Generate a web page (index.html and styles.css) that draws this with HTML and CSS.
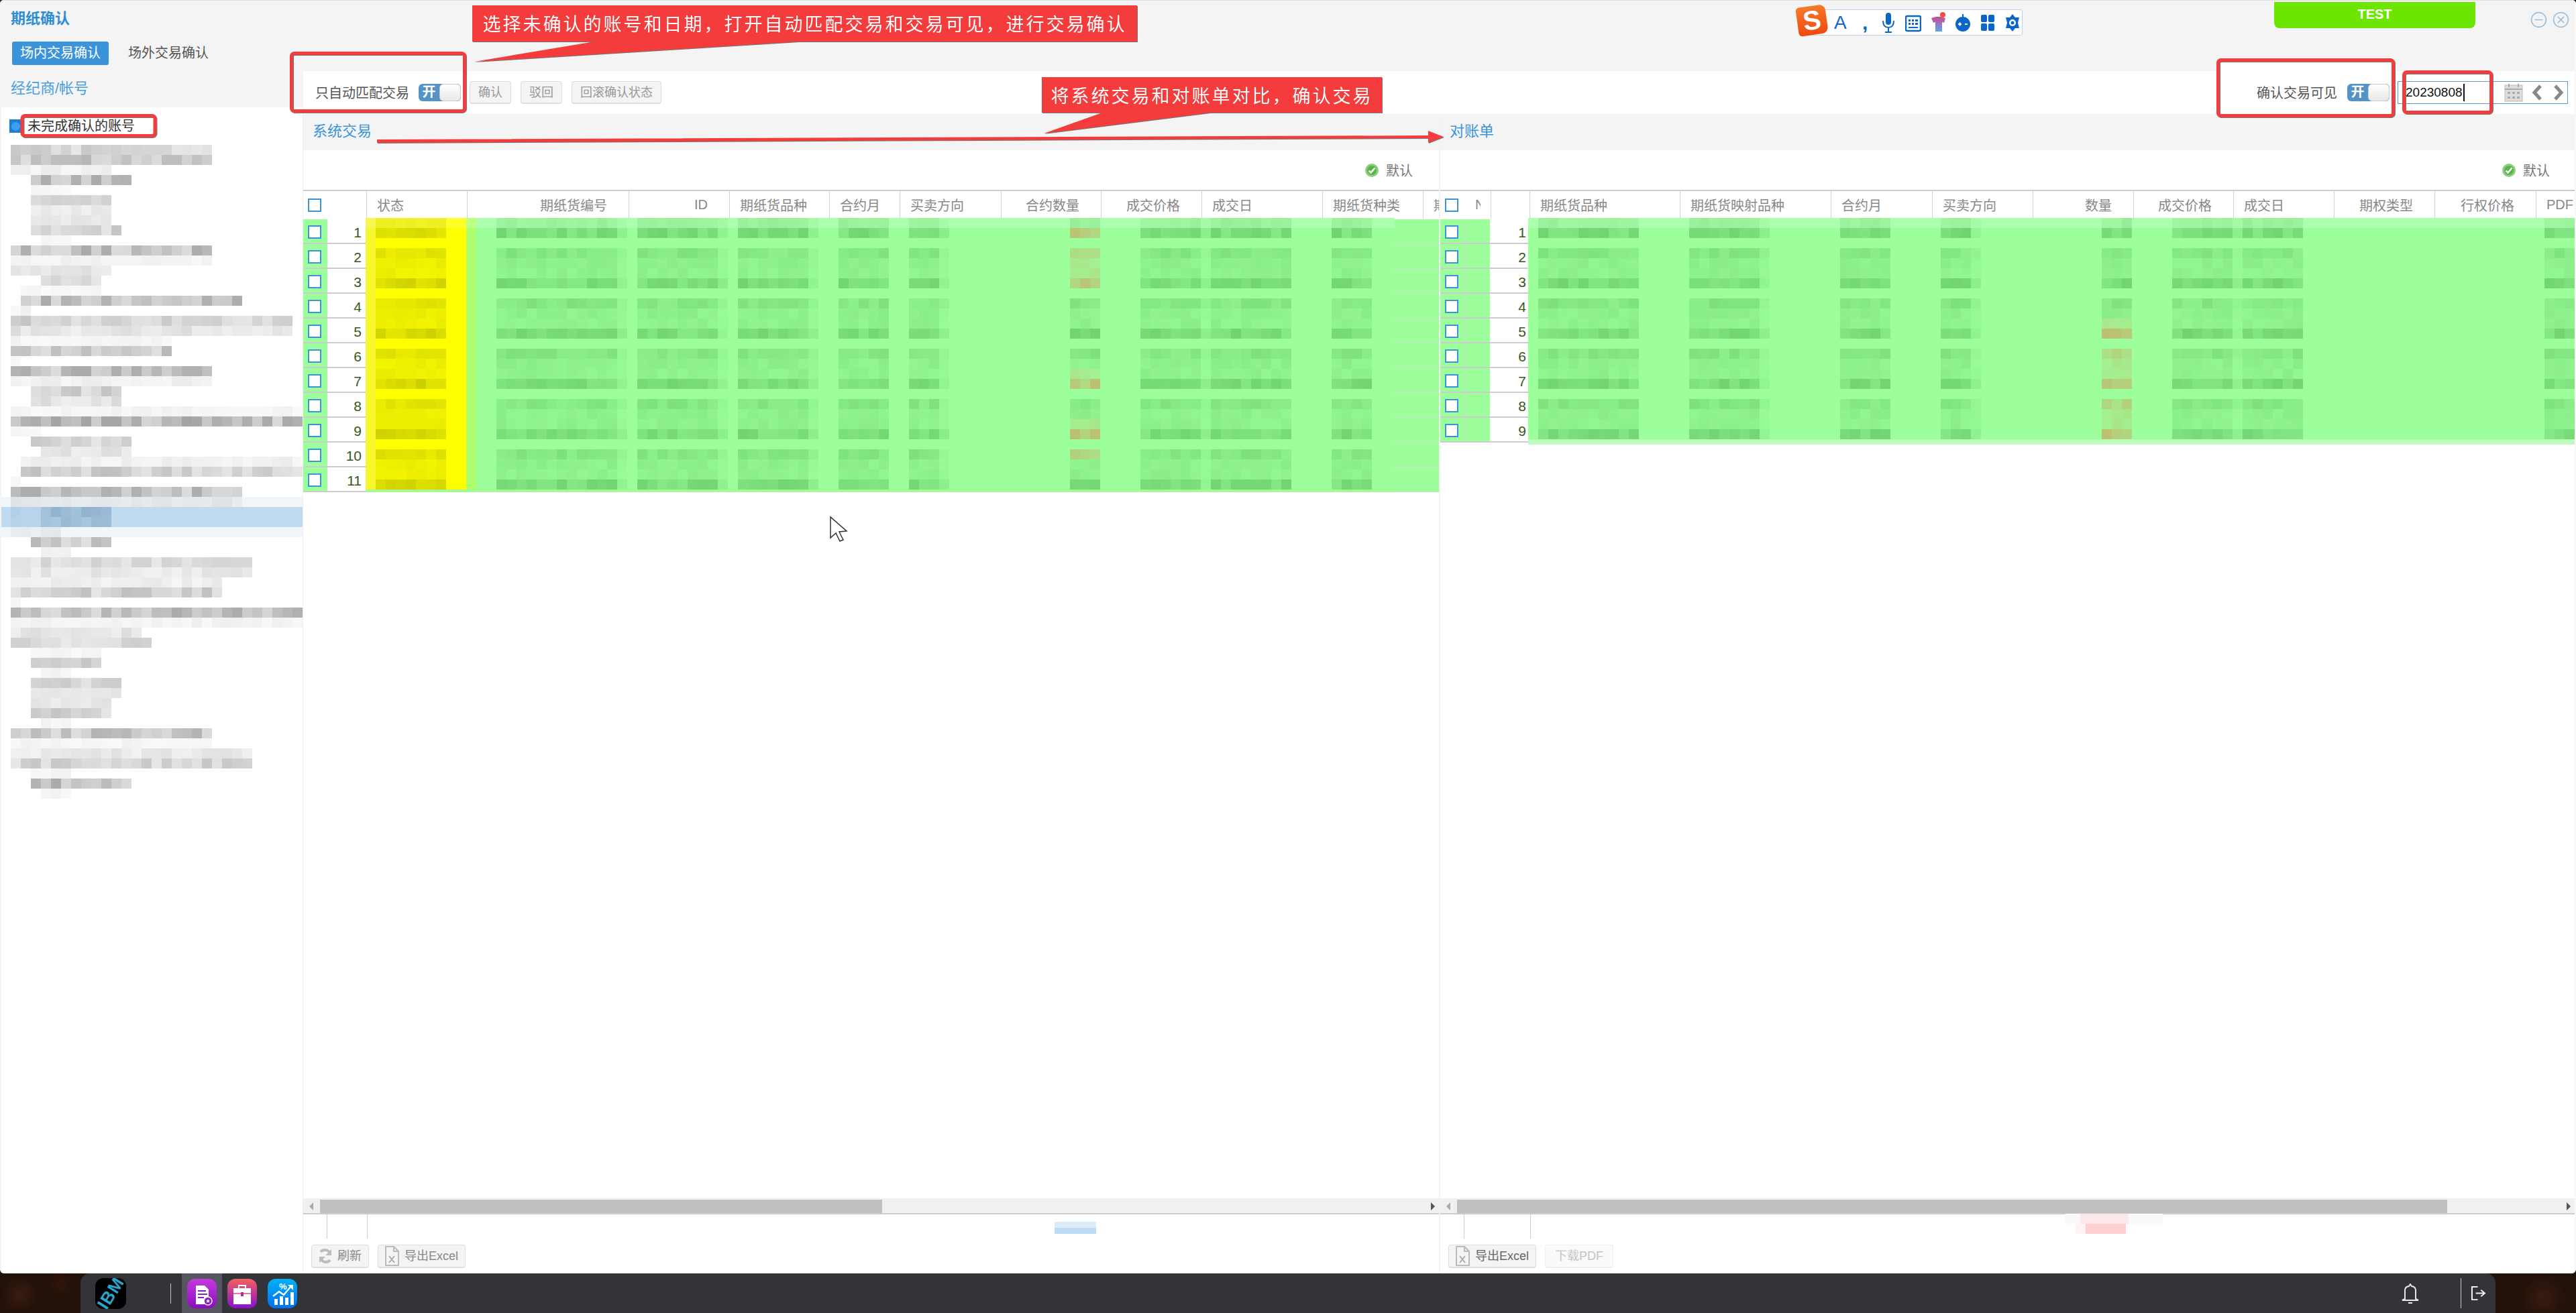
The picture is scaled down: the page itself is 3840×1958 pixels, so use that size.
FILE: index.html
```html
<!DOCTYPE html>
<html lang="zh-CN">
<head>
    <meta charset="UTF-8">
    <title>期纸确认</title>
    <link rel="stylesheet" href="styles.css">
</head>
<body>
    <div class="window">
        <aside class="sidebar">
            <div class="side-head">
                <div class="side-title">期纸确认</div>
                <div class="tabs">
                    <span class="tab tab-on">场内交易确认</span>
                    <span class="tab">场外交易确认</span>
                </div>
                <div class="side-sub">经纪商/帐号</div>
            </div>
            <div class="tree">
                <div class="tree-filter">
                    <span class="radio"><i></i></span>
                    <span class="filter-text">未完成确认的账号</span>
                </div>
                <canvas id="treeMosaic" class="tree-mosaic" width="450" height="975"></canvas>
            </div>
        </aside>

        <main class="main">
            <div class="topbar">
                <div class="test-tag">TEST</div>
                <div class="win-btns">
                    <svg class="win-btn" viewBox="0 0 24 24"><circle cx="12" cy="12" r="10.5"/><path d="M6 12h12"/></svg>
                    <svg class="win-btn" viewBox="0 0 24 24"><circle cx="12" cy="12" r="10.5"/><path d="M7.5 7.5l9 9M16.5 7.5l-9 9"/></svg>
                </div>
            </div>

            <div class="toolbar">
                <span class="tool-label">只自动匹配交易</span>
                <span class="switch switch-a"><b>开</b><i></i></span>
                <button class="btn btn-confirm">确认</button>
                <button class="btn">驳回</button>
                <button class="btn">回滚确认状态</button>
                <div class="tool-right">
                    <span class="tool-label">确认交易可见</span>
                    <span class="switch switch-b"><b>开</b><i></i></span>
                    <div class="date-field">
                        <span class="date-text">20230808</span><span class="caret"></span>
                        <svg class="cal-icon" viewBox="0 0 28 28">
                            <rect x="1" y="3" width="26" height="24" fill="#ddd" stroke="#bbb"/>
                            <path d="M1 9h26" stroke="#aaa" stroke-width="2"/>
                            <path d="M7 1v5M21 1v5" stroke="#aaa" stroke-width="2"/>
                            <path d="M5 13h4v3H5zM12 13h4v3h-4zM19 13h4v3h-4zM5 20h4v3H5zM12 20h4v3h-4zM19 20h4v3h-4z" fill="#aaa"/>
                        </svg>
                        <svg class="chev" viewBox="0 0 16 24"><path d="M13 2L4 12l9 10"/></svg>
                        <svg class="chev chev-next" viewBox="0 0 16 24"><path d="M3 2l9 10-9 10"/></svg>
                    </div>
                </div>
            </div>

            <div class="panes">
                <section class="pane pane-left">
                    <div class="pane-title">系统交易</div>
                    <div class="pane-tools">
                        <svg class="ok-icon" viewBox="0 0 20 20"><circle cx="10" cy="10" r="10" fill="#8ccf7a"/><circle cx="10" cy="10" r="7" fill="#5cb350"/><path d="M5.5 10.5l3 3 6-7" fill="none" stroke="#fff" stroke-width="2.4"/></svg>
                        <span>默认</span>
                    </div>
                    <div class="grid-head head-left">
                        <span class="cell"><i class="box"></i></span>
                        <span class="cell cell-line"></span>
                        <span class="cell cell-line">状态</span>
                        <span class="cell cell-line to-right">期纸货编号</span>
                        <span class="cell cell-line to-right">ID</span>
                        <span class="cell cell-line">期纸货品种</span>
                        <span class="cell cell-line">合约月</span>
                        <span class="cell cell-line">买卖方向</span>
                        <span class="cell cell-line to-right">合约数量</span>
                        <span class="cell cell-line to-right">成交价格</span>
                        <span class="cell cell-line">成交日</span>
                        <span class="cell cell-line">期纸货种类</span>
                        <span class="cell">期权类型</span>
                    </div>
                    <div class="grid-body">
                        <div class="row row-left"><span class="c-check"><i class="box"></i></span><span class="c-num">1</span><span class="c-state"></span><span class="c-fill"></span></div>
                        <div class="row row-left"><span class="c-check"><i class="box"></i></span><span class="c-num">2</span><span class="c-state"></span><span class="c-fill"></span></div>
                        <div class="row row-left"><span class="c-check"><i class="box"></i></span><span class="c-num">3</span><span class="c-state"></span><span class="c-fill"></span></div>
                        <div class="row row-left"><span class="c-check"><i class="box"></i></span><span class="c-num">4</span><span class="c-state"></span><span class="c-fill"></span></div>
                        <div class="row row-left"><span class="c-check"><i class="box"></i></span><span class="c-num">5</span><span class="c-state"></span><span class="c-fill"></span></div>
                        <div class="row row-left"><span class="c-check"><i class="box"></i></span><span class="c-num">6</span><span class="c-state"></span><span class="c-fill"></span></div>
                        <div class="row row-left"><span class="c-check"><i class="box"></i></span><span class="c-num">7</span><span class="c-state"></span><span class="c-fill"></span></div>
                        <div class="row row-left"><span class="c-check"><i class="box"></i></span><span class="c-num">8</span><span class="c-state"></span><span class="c-fill"></span></div>
                        <div class="row row-left"><span class="c-check"><i class="box"></i></span><span class="c-num">9</span><span class="c-state"></span><span class="c-fill"></span></div>
                        <div class="row row-left"><span class="c-check"><i class="box"></i></span><span class="c-num">10</span><span class="c-state"></span><span class="c-fill"></span></div>
                        <div class="row row-left"><span class="c-check"><i class="box"></i></span><span class="c-num">11</span><span class="c-state"></span><span class="c-fill"></span></div>
                        <canvas id="leftMosaic" class="mosaic mosaic-left" width="1534" height="409"></canvas>
                    </div>
                    <div class="hscroll">
                        <i class="arrow arrow-back"></i>
                        <i class="thumb thumb-left"></i>
                        <i class="arrow arrow-next"></i>
                    </div>
                    <div class="sum-row">
                        <i class="sum-a"></i><i class="sum-b"></i>
                        <i class="sum-blur sum-blue"></i>
                    </div>
                    <div class="pane-foot">
                        <button class="btn foot-btn">
                            <svg class="foot-icon" viewBox="0 0 20 24"><path d="M17 9a8 8 0 0 0-14-3M3 15a8 8 0 0 0 14 3" fill="none" stroke="#bbb" stroke-width="4"/><path d="M19 2v9h-9zM1 22v-9h9z" fill="#bbb"/></svg>
                            刷新
                        </button>
                        <button class="btn foot-btn">
                            <svg class="foot-icon doc-icon" viewBox="0 0 21 30"><path d="M1 1h12l7 7v21H1z" fill="none" stroke="#bbb" stroke-width="2"/><path d="M13 1v7h7" fill="none" stroke="#bbb" stroke-width="2"/><path d="M6 15l8 10M14 15L6 25" stroke="#aaa" stroke-width="2"/></svg>
                            导出Excel
                        </button>
                    </div>
                </section>

                <section class="pane pane-right">
                    <div class="pane-title">对账单</div>
                    <div class="pane-tools">
                        <svg class="ok-icon" viewBox="0 0 20 20"><circle cx="10" cy="10" r="10" fill="#8ccf7a"/><circle cx="10" cy="10" r="7" fill="#5cb350"/><path d="M5.5 10.5l3 3 6-7" fill="none" stroke="#fff" stroke-width="2.4"/></svg>
                        <span>默认</span>
                    </div>
                    <div class="grid-head head-right">
                        <span class="cell"><i class="box"></i></span>
                        <span class="cell cell-clip">NO</span>
                        <span class="cell cell-line"></span>
                        <span class="cell cell-line"></span>
                        <span class="cell cell-line">期纸货品种</span>
                        <span class="cell cell-line">期纸货映射品种</span>
                        <span class="cell cell-line">合约月</span>
                        <span class="cell cell-line">买卖方向</span>
                        <span class="cell cell-line to-right">数量</span>
                        <span class="cell cell-line to-right">成交价格</span>
                        <span class="cell cell-line">成交日</span>
                        <span class="cell cell-line to-right">期权类型</span>
                        <span class="cell cell-line to-right">行权价格</span>
                        <span class="cell">PDF</span>
                    </div>
                    <div class="grid-body">
                        <div class="row row-right"><span class="c-check c-check-line"><i class="box"></i></span><span class="c-no"></span><span class="c-num">1</span><span class="c-fill"></span></div>
                        <div class="row row-right"><span class="c-check c-check-line"><i class="box"></i></span><span class="c-no"></span><span class="c-num">2</span><span class="c-fill"></span></div>
                        <div class="row row-right"><span class="c-check c-check-line"><i class="box"></i></span><span class="c-no"></span><span class="c-num">3</span><span class="c-fill"></span></div>
                        <div class="row row-right"><span class="c-check c-check-line"><i class="box"></i></span><span class="c-no"></span><span class="c-num">4</span><span class="c-fill"></span></div>
                        <div class="row row-right"><span class="c-check c-check-line"><i class="box"></i></span><span class="c-no"></span><span class="c-num">5</span><span class="c-fill"></span></div>
                        <div class="row row-right"><span class="c-check c-check-line"><i class="box"></i></span><span class="c-no"></span><span class="c-num">6</span><span class="c-fill"></span></div>
                        <div class="row row-right"><span class="c-check c-check-line"><i class="box"></i></span><span class="c-no"></span><span class="c-num">7</span><span class="c-fill"></span></div>
                        <div class="row row-right"><span class="c-check c-check-line"><i class="box"></i></span><span class="c-no"></span><span class="c-num">8</span><span class="c-fill"></span></div>
                        <div class="row row-right"><span class="c-check c-check-line"><i class="box"></i></span><span class="c-no"></span><span class="c-num">9</span><span class="c-fill"></span></div>
                        <canvas id="rightMosaic" class="mosaic mosaic-right" width="1560" height="338"></canvas>
                    </div>
                    <div class="hscroll">
                        <i class="arrow arrow-back"></i>
                        <i class="thumb thumb-right"></i>
                        <i class="arrow arrow-next"></i>
                    </div>
                    <div class="sum-row sum-row-right">
                        <i class="sum-a"></i><i class="sum-b"></i>
                        <i class="sum-blur sum-pink-top"></i>
                        <i class="sum-blur sum-pink"></i>
                    </div>
                    <div class="pane-foot">
                        <button class="btn foot-btn">
                            <svg class="foot-icon doc-icon" viewBox="0 0 21 30"><path d="M1 1h12l7 7v21H1z" fill="none" stroke="#bbb" stroke-width="2"/><path d="M13 1v7h7" fill="none" stroke="#bbb" stroke-width="2"/><path d="M6 15l8 10M14 15L6 25" stroke="#aaa" stroke-width="2"/></svg>
                            <span class="btn-dark">导出Excel</span>
                        </button>
                        <button class="btn foot-btn btn-off">下载PDF</button>
                    </div>
                </section>
            </div>
        </main>
    </div>

    <div class="dock">
        <span class="app-ibm"><span>IBM</span></span>
        <i class="dock-sep"></i>
        <span class="dock-active">
            <span class="app-icon app-purple">
                <svg viewBox="0 0 44 44"><path d="M13 10h13l6 6v22H13z" fill="#fff"/><path d="M16 18h12M16 23h14M16 28h9" stroke="#8a1fc0" stroke-width="2"/><circle cx="31" cy="33" r="6" fill="#8a1fc0" stroke="#fff" stroke-width="1.5"/><path d="M31 30l1 2.2h2l-1.6 1.4.6 2.2-2-1.2-2 1.2.6-2.2-1.6-1.4h2z" fill="#fff"/></svg>
            </span>
        </span>
        <span class="app-icon app-red">
            <svg viewBox="0 0 44 44"><path d="M17 14v-4h10v4" fill="none" stroke="#fff" stroke-width="2"/><rect x="9" y="14" width="26" height="24" fill="#fff"/><path d="M9 22h26" stroke="#d84a8a" stroke-width="1.5"/><rect x="20" y="20" width="4" height="6" fill="#b02aa0"/></svg>
        </span>
        <span class="app-icon app-blue">
            <svg viewBox="0 0 44 44"><path d="M10 30v9h5v-9zM18 26v13h5V26zM26 28v11h5V28zM34 20v19h5V20z" fill="#fff"/><path d="M8 26l9-7 7 5 11-13" fill="none" stroke="#fff" stroke-width="2.4"/><path d="M30 9h8v8z" fill="#fff"/><text x="17" y="16" class="app-pct">%</text></svg>
        </span>
        <span class="dock-space"></span>
        <svg class="bell" viewBox="0 0 26 30"><path d="M5 23V10q0-5 6-6l2-3 2 3q6 1 6 6v13l4 2H1z" fill="none" stroke="#e8e8e8" stroke-width="2"/><path d="M10 29h6" stroke="#e8e8e8" stroke-width="2"/></svg>
        <i class="dock-sep dock-sep-end"></i>
        <svg class="exit" viewBox="0 0 24 24"><path d="M11 2H2v20h9" fill="none" stroke="#eee" stroke-width="2"/><path d="M2 2l0 20" stroke="#eee" stroke-width="2"/><path d="M8 12h13M16 7l6 5-6 5" fill="none" stroke="#eee" stroke-width="2"/></svg>
    </div>

    <div class="sogou">
        <span class="sogou-logo">S</span>
        <span class="sogou-a">A</span>
        <span class="sogou-dot">,</span>
        <svg class="sogou-icon" viewBox="0 0 24 32"><rect x="8" y="1" width="8" height="18" rx="4" fill="#0a66c8"/><path d="M4 13q0 10 8 10t8-10M12 23v7M7 30h10" fill="none" stroke="#0a66c8" stroke-width="2"/></svg>
        <svg class="sogou-icon" viewBox="0 0 24 32"><rect x="1" y="6" width="22" height="22" rx="2" fill="none" stroke="#0a66c8" stroke-width="2.5"/><path d="M5 11h3v3H5zM10 11h3v3h-3zM15 11h4v3h-4zM5 16h3v3H5zM10 16h3v3h-3zM15 16h4v3h-4zM5 22h14v2H5z" fill="#0a66c8"/></svg>
        <svg class="sogou-icon" viewBox="0 0 24 32"><defs><linearGradient id="shirt" x1="0" y1="0" x2="0" y2="1"><stop offset="0" stop-color="#d04a90"/><stop offset="1" stop-color="#58a8f0"/></linearGradient></defs><path d="M2 9l7-2h7l7 2-2 7-3-1v14H8V15l-3 1z" fill="url(#shirt)"/><circle cx="19" cy="4" r="4" fill="#f0503c"/></svg>
        <svg class="sogou-icon" viewBox="0 0 24 32"><circle cx="12" cy="18" r="11" fill="#0a66c8"/><path d="M12 3v6" stroke="#0a66c8" stroke-width="2"/><path d="M5 18h5M7.5 15.500v5M15 18h4" stroke="#fff" stroke-width="2"/></svg>
        <svg class="sogou-icon" viewBox="0 0 24 32"><rect x="2" y="4" width="9" height="11" rx="2" fill="#0a66c8"/><rect x="13" y="4" width="9" height="11" rx="2" fill="#0a66c8"/><rect x="2" y="17" width="9" height="11" rx="2" fill="#0a66c8"/><rect x="13" y="17" width="9" height="11" rx="2" fill="#0a66c8"/></svg>
        <svg class="sogou-icon" viewBox="0 0 24 32"><path d="M12 3l4 5h6l-2 8 2 8h-6l-4 5-4-5H2l2-8-2-8h6z" fill="#0a66c8"/><circle cx="12" cy="16" r="5" fill="#fff"/><circle cx="12" cy="16" r="2.500" fill="#0a66c8"/></svg>
    </div>

    <svg class="marks" width="3840" height="1958" viewBox="0 0 3840 1958">
        <path d="M3309 92h256v14h-256zM3309 170h256v2h-256z" fill="#fff"/>
        <g class="marks-red">
            <path d="M704 8H1695V62H1191L707 92 886 62H704z"/>
            <path d="M1553 115H2060V168H1804L1556 199 1643 168H1553z"/>
            <path d="M562 208L2129 202V195L2152 204 2129 213V206L562 213z"/>
            <rect class="mark-box" x="434.500" y="79.500" width="258" height="86" rx="4"/>
            <rect class="mark-box" x="33" y="172.500" width="198" height="30" rx="4"/>
            <rect class="mark-box" x="3306.500" y="89.500" width="261" height="83" rx="4"/>
            <rect class="mark-box" x="3583.500" y="107.500" width="130" height="60" rx="4"/>
        </g>
        <path class="pointer" d="M1238 771v31l8-7 6 12 5-2-6-12 11-1z"/>
    </svg>
    <div class="callout callout-a">选择未确认的账号和日期，打开自动匹配交易和交易可见，进行交易确认</div>
    <div class="callout callout-b">将系统交易和对账单对比，确认交易</div>

    <script src="script.js"></script>
</body>
</html>
```

FILE: styles.css
```css
* {
    box-sizing: border-box;
}
html, body {
    margin: 0;
    height: 1958px;
    overflow: hidden;
}
body {
    position: relative;
    width: 3840px;
    font-family: "Liberation Sans", "Noto Sans CJK SC", sans-serif;
    color: #777;
    background-color: #22100a;
    background-image:
        radial-gradient(circle at 30px 1930px, #3a1c10 0, transparent 30px),
        radial-gradient(circle at 3790px 1935px, #3a1c10 0, transparent 36px),
        radial-gradient(circle at 90px 1915px, #301608 0, transparent 22px);
}
button {
    font-family: inherit;
}

/* app window */
.window {
    display: flex;
    height: 1899px;
    background: #f4f4f4;
    border-top: 1px solid #ddd;
    border-right: 2px solid #f8f8f8;
    border-bottom: 1px solid #eee;
    border-radius: 5px 5px 6px 6px;
    overflow: hidden;
}

/* sidebar */
.sidebar {
    display: flex;
    flex-direction: column;
    flex: none;
    width: 452px;
}
.side-head {
    flex: none;
    height: 159px;
    padding: 14px 0 0 16px;
}
.side-title {
    height: 26px;
    font-size: 22px;
    line-height: 26px;
    font-weight: 700;
    color: #2f8ed2;
}
.tabs {
    display: flex;
    gap: 17px;
    margin: 21px 0 0 2px;
}
.tab {
    height: 35px;
    padding: 0 12px;
    border-radius: 3px;
    font-size: 20px;
    line-height: 35px;
    color: #555;
}
.tab-on {
    background: #3b94d9;
    color: #fff;
}
.side-sub {
    margin-top: 21px;
    font-size: 22px;
    line-height: 28px;
    color: #4b9fdc;
}
.tree {
    flex: 1;
    margin-left: 2px;
    padding-top: 18px;
    background: #fff;
    border-right: 1px solid #f0f0f0;
}
.tree-filter {
    display: flex;
    align-items: center;
    height: 20px;
    padding-left: 12px;
}
.radio {
    display: flex;
    align-items: center;
    width: 18px;
    height: 20px;
    padding-left: 3px;
    background: #1e7fd0;
}
.radio i {
    width: 13px;
    height: 13px;
    border-radius: 50%;
    background: #3aa0f4;
}
.filter-text {
    margin-left: 9px;
    font-size: 20px;
    line-height: 20px;
    color: #333;
}
.tree-mosaic {
    display: block;
    margin-top: 18px;
}

/* main column */
.main {
    display: flex;
    flex-direction: column;
    flex: 1;
    min-width: 0;
}
.topbar {
    display: flex;
    justify-content: flex-end;
    flex: none;
    height: 105px;
    padding-right: 8px;
}
.test-tag {
    width: 300px;
    height: 39px;
    margin-top: 2px;
    border-radius: 0 0 8px 8px;
    background: #6ce600;
    color: #fff;
    font-size: 20px;
    font-weight: 700;
    line-height: 36px;
    text-align: center;
}
.win-btns {
    display: flex;
    gap: 8px;
    margin: 16px 0 0 82px;
}
.win-btn {
    width: 25px;
    height: 25px;
    fill: none;
    stroke: #9cc0dc;
    stroke-width: 1.6;
}

/* toolbar */
.toolbar {
    display: flex;
    align-items: center;
    flex: none;
    height: 64px;
    padding: 0 10px 0 18px;
    background: #fff;
}
.tool-label {
    font-size: 20px;
    line-height: 26px;
    color: #555;
    margin-top: 2px;
}
.switch {
    display: flex;
    flex: none;
    width: 63px;
    height: 26px;
    margin-left: 14px;
    border-radius: 6px;
    overflow: hidden;
    background: #5593c7;
}
.switch b {
    width: 31px;
    color: #fff;
    font-size: 20px;
    line-height: 25px;
    text-align: center;
}
.switch i {
    flex: 1;
    background: linear-gradient(#fff, #e8e8e8);
    border: 1px solid #ccc;
    border-radius: 6px;
}
.switch-a {
    margin-right: 13px;
}
.btn {
    height: 34px;
    margin-right: 14px;
    padding: 0 12px;
    border: 1px solid #ddd;
    border-bottom-width: 2px;
    border-radius: 4px;
    background: #f4f4f4;
    color: #999;
    font-size: 18px;
    line-height: 30px;
}
.tool-right {
    display: flex;
    align-items: center;
    margin-left: auto;
}
.switch-b {
    margin-left: 15px;
}
.date-field {
    display: flex;
    align-items: center;
    width: 254px;
    height: 34px;
    margin-left: 12px;
    padding-left: 11px;
    border: 1px solid #5b9bd5;
    color: #111;
    font-size: 19px;
}
.caret {
    width: 2px;
    height: 26px;
    margin-left: 1px;
    background: #111;
}
.cal-icon {
    width: 28px;
    height: 28px;
    margin-left: 59px;
}
.chev {
    width: 16px;
    height: 24px;
    margin-left: 13px;
    fill: none;
    stroke: #888;
    stroke-width: 5;
}
.chev-next {
    margin-left: 16px;
}

/* the two grids */
.panes {
    display: flex;
    flex: 1;
    min-height: 0;
}
.pane {
    display: flex;
    flex-direction: column;
    min-width: 0;
}
.pane-left {
    flex: none;
    width: 1695px;
    border-right: 2px solid #f2f2f2;
}
.pane-right {
    flex: 1;
}
.pane-title {
    flex: none;
    height: 54px;
    padding-left: 14px;
    background: #f4f4f4;
    color: #3b94d9;
    font-size: 22px;
    line-height: 52px;
}
.pane-tools {
    display: flex;
    align-items: center;
    justify-content: flex-end;
    gap: 11px;
    flex: none;
    height: 59px;
    padding-right: 39px;
    background: #fff;
    font-size: 20px;
    color: #777;
}
.pane-right .pane-tools {
    padding-right: 37px;
}
.ok-icon {
    width: 20px;
    height: 20px;
}
.grid-head {
    display: grid;
    flex: none;
    height: 43px;
    border-top: 2px solid #ccc;
    background: #fff;
}
.head-left {
    grid-template-columns: 36px 59px 150px 241px 150px 149px 105px 151px 149px 150px 180px 150px 1fr;
}
.head-right {
    grid-template-columns: 36px 24px 14px 60px 224px 225px 151px 150px 150px 149px 150px 150px 151px 1fr;
}
.cell {
    display: flex;
    align-items: center;
    padding-left: 15px;
    overflow: hidden;
    white-space: nowrap;
    font-size: 20px;
    color: #888;
}
.cell:first-child {
    padding-left: 7px;
}
.cell-line {
    border-right: 1px solid #d4d4d4;
}
.cell-clip {
    padding-left: 16px;
    padding-right: 0;
}
.to-right {
    justify-content: flex-end;
    padding: 0 32px 0 0;
}
.box {
    display: block;
    width: 20px;
    height: 20px;
    border: 2px solid #3b94d9;
    background: #fff;
}
.grid-body {
    position: relative;
    flex: 1;
    padding-top: 1px;
    background: #fff;
}
.row {
    display: flex;
    height: 37px;
    border-bottom: 2px solid #ccc;
}
.c-check {
    display: flex;
    align-items: center;
    flex: none;
    width: 36px;
    height: 35px;
    padding: 3px 0 0 7px;
    background: #9cff9c;
}
.c-check-line {
    border-right: 1px solid #c8dcc8;
}
.c-no {
    flex: none;
    width: 38px;
    background: #9cff9c;
}
.c-num {
    flex: none;
    width: 59px;
    padding-right: 8px;
    font-size: 21px;
    line-height: 39px;
    text-align: right;
    color: #35571c;
}
.row-right .c-num {
    width: 60px;
    padding-right: 6px;
}
.c-state {
    flex: none;
    width: 150px;
    background: #ff0;
}
.c-fill {
    flex: 1;
    margin-bottom: -2px;
    border-bottom: 1px solid #cfe0d0;
    background: #9cff9c;
}

/* pixelated cells sit on top of the grid */
.mosaic {
    position: absolute;
    top: -1px;
}
.mosaic-left {
    left: 93px;
}
.mosaic-right {
    left: 131px;
}

/* horizontal scrollbar */
.hscroll {
    display: flex;
    align-items: center;
    flex: none;
    height: 24px;
    padding-top: 2px;
    background: #f0f0f0;
    border-bottom: 2px solid #ccc;
}
.thumb {
    display: block;
    height: 20px;
    background: #c0c0c0;
}
.thumb-left {
    width: 838px;
}
.thumb-right {
    width: 1476px;
}
.arrow {
    flex: none;
    width: 0;
    height: 0;
    border-top: 6px solid transparent;
    border-bottom: 6px solid transparent;
}
.arrow-back {
    margin: 0 10px 0 9px;
    border-right: 6px solid #aaa;
}
.arrow-next {
    margin-left: auto;
    margin-right: 6px;
    border-left: 6px solid #555;
}
.sum-row {
    position: relative;
    display: flex;
    flex: none;
    height: 36px;
    background: #fff;
}
.sum-a {
    width: 36px;
    border-right: 1px solid #ccc;
}
.sum-b {
    width: 60px;
    border-right: 1px solid #ccc;
}
.sum-row-right .sum-b {
    width: 99px;
}
.sum-blur {
    position: absolute;
}
.sum-blue {
    left: 1120px;
    top: 11px;
    width: 62px;
    height: 18px;
    background: linear-gradient(#dcebf8 0 50%, #bcdcf6 50%);
}
.sum-pink-top {
    left: 932px;
    top: -1px;
    width: 145px;
    height: 15px;
    background: linear-gradient(90deg, #fbfafa 0 15%, #fbe9ea 15% 65%, #fbfafa 65%);
}
.sum-pink {
    left: 947px;
    top: 14px;
    width: 75px;
    height: 15px;
    background: linear-gradient(90deg, #fff2f2 0 20%, #ffcfd1 20%);
}
.pane-foot {
    display: flex;
    flex: none;
    height: 51px;
    padding: 9px 0 0 12px;
    background: #fff;
}
.foot-btn {
    display: flex;
    align-items: center;
    gap: 8px;
    height: 35px;
    margin-right: 13px;
    padding: 0 10px;
    color: #888;
}
.foot-icon {
    width: 20px;
    height: 24px;
}
.doc-icon {
    width: 21px;
    height: 30px;
}
.btn-dark {
    color: #666;
}
.btn-off {
    padding: 0 14px;
    background: #fafafa;
    border-color: #eee;
    color: #c4c4c4;
}

/* bottom dock */
.dock {
    display: flex;
    align-items: center;
    height: 59px;
    margin: 0 120px;
    padding-left: 22px;
    border-radius: 14px 14px 0 0;
    background: #33343a;
}
.app-ibm {
    display: flex;
    align-items: center;
    justify-content: center;
    width: 46px;
    height: 46px;
    border-radius: 12px;
    background: #000;
    overflow: hidden;
}
.app-ibm span {
    transform: rotate(-58deg);
    color: #2aa4c8;
    font-size: 26px;
    font-weight: 700;
    letter-spacing: 1px;
}
.dock-sep {
    flex: none;
    width: 1px;
    height: 30px;
    margin: 0 16px 0 66px;
    background: #c8c8c8;
}
.dock-active {
    display: flex;
    align-items: center;
    justify-content: center;
    width: 60px;
    height: 59px;
    margin-right: 8px;
    background: #555660;
}
.app-icon {
    display: block;
    flex: none;
    width: 44px;
    height: 44px;
    border-radius: 12px;
}
.app-icon svg {
    display: block;
    width: 44px;
    height: 44px;
}
.app-purple {
    background: linear-gradient(#c43adc, #8a0fc0);
}
.app-red {
    margin-right: 16px;
    background: linear-gradient(#f4605c, #8a0fd0);
}
.app-blue {
    background: linear-gradient(#00b2f4, #0070f0);
}
.app-pct {
    fill: #fff;
    font-size: 13px;
    font-weight: 700;
}
.dock-space {
    flex: 1;
}
.bell {
    width: 26px;
    height: 30px;
}
.dock-sep-end {
    height: 45px;
    margin: 0 14px 0 62px;
}
.exit {
    width: 23px;
    height: 23px;
    margin-right: 14px;
}

/* floating input method bar */
.sogou {
    position: absolute;
    left: 2690px;
    top: 14px;
    display: flex;
    align-items: center;
    width: 325px;
    height: 39px;
    padding-left: 43px;
    border: 1px solid #bcd0e8;
    border-radius: 3px;
    background: #fff;
}
.sogou-logo {
    position: absolute;
    left: -12px;
    top: -6px;
    width: 44px;
    height: 43px;
    border-radius: 5px 9px 9px 5px;
    transform: rotate(-8deg);
    background: linear-gradient(#f47a2a, #f04a10);
    color: #fff;
    font-size: 40px;
    font-weight: 700;
    line-height: 43px;
    text-align: center;
}
.sogou-a {
    flex: none;
    width: 30px;
    color: #0a66c8;
    font-size: 28px;
    line-height: 30px;
}
.sogou-dot {
    flex: none;
    width: 39px;
    padding-left: 12px;
    color: #0a66c8;
    font-size: 30px;
    font-weight: 700;
    line-height: 24px;
}
.sogou-icon {
    flex: none;
    width: 24px;
    height: 32px;
    margin-right: 13px;
}
.sogou-icon:last-child {
    margin-right: 0;
}

/* red annotation layer */
.marks {
    position: absolute;
    left: 0;
    top: 0;
    pointer-events: none;
}
.marks-red {
    fill: #f43c3c;
    filter: drop-shadow(1px 1px 0 #777);
}
.mark-box {
    fill: none;
    stroke: #f43c3c;
    stroke-width: 5;
}
.pointer {
    fill: #fff;
    stroke: #333;
    stroke-width: 1.5;
}
.callout {
    position: absolute;
    color: #fff;
    font-family: "Noto Sans CJK SC", sans-serif;
    font-size: 27px;
    letter-spacing: 3px;
    white-space: nowrap;
    text-align: center;
}
.callout-a {
    left: 704px;
    top: 8px;
    width: 991px;
    line-height: 54px;
}
.callout-b {
    left: 1553px;
    top: 115px;
    width: 507px;
    line-height: 53px;
}
```

FILE: script.js
```js
// pixelate the redacted cells, same 15px blocks everywhere
const BLOCK = 15;
let seed = 20230808;

function rnd() {
    seed = (seed * 1664525 + 1013904223) % 4294967296;
    return seed / 4294967296;
}

// how strong a text band is, repeats every two table rows
function bandStrength(k) {
    return [0.12, 0.3, 0, 0.21, 0.13][k % 5];
}

function drawGridMosaic(id, opts) {
    const ctx = document.getElementById(id).getContext('2d');
    const w = ctx.canvas.width;
    const h = ctx.canvas.height;
    const bands = Math.floor(h / BLOCK);

    ctx.fillStyle = '#9cff9c';
    ctx.fillRect(0, 0, w, h);
    if (opts.stateEnd) {
        ctx.fillStyle = '#ffff00';
        ctx.fillRect(0, 0, opts.stateEnd, h);
        ctx.fillStyle = '#f6f62e';
        ctx.fillRect(0, 0, BLOCK, h);
        ctx.fillStyle = '#aeff70';
        ctx.fillRect(opts.stateEnd, 0, BLOCK, h);
    }
    ctx.fillStyle = 'rgba(255,255,255,0.16)';
    ctx.fillRect(0, 0, w, BLOCK);
    ctx.fillStyle = opts.tailColor;
    ctx.fillRect(0, bands * BLOCK, w, h - bands * BLOCK);

    for (let k = 0; k < bands; k++) {
        const s = bandStrength(k);
        if (!s) continue;
        opts.cols.forEach(function(col) {
            for (let c = col[0]; c < col[1]; c++) {
                const orange = col[2] === 'qty' && opts.tinted.indexOf(k) >= 0;
                const edge = c === col[1] - 1 && col[2] === 'edge';
                let a = s * (0.65 + rnd() * 0.6);
                if (edge) a = a * 0.4;
                if (orange) {
                    ctx.fillStyle = 'rgba(220,130,70,' + Math.min(a * 1.4, 0.5) + ')';
                } else if (col[2] === 'state') {
                    ctx.fillStyle = 'rgba(120,130,0,' + a + ')';
                } else {
                    ctx.fillStyle = 'rgba(40,140,40,' + a + ')';
                }
                ctx.fillRect(c * BLOCK, k * BLOCK, BLOCK, BLOCK);
            }
        });
    }
}

drawGridMosaic('leftMosaic', {
    stateEnd: 150,
    tailColor: '#a8f898',
    tinted: [1, 3, 4, 5, 6, 15, 16, 20, 21, 23],
    cols: [
        [1, 8, 'state'], [13, 26, 'edge'], [27, 36, 'edge'], [37, 45, 'edge'],
        [47, 52], [54, 58, 'edge'], [70, 73, 'qty'], [77, 84, 'edge'],
        [84, 92], [96, 100]
    ]
});

drawGridMosaic('rightMosaic', {
    tailColor: '#c0fcc0',
    tinted: [10, 11, 13, 14, 15, 16, 18, 19, 20, 21],
    cols: [
        [1, 11], [16, 24, 'edge'], [31, 36], [41, 45, 'edge'],
        [57, 60, 'qty'], [64, 71, 'edge'], [71, 77], [101, 104]
    ]
});

// sidebar tree: one entry per 15px band: first block, last block, darkness
const treeBands = [
    [0, 20, .4], [0, 20, .55], [0, 10, .14], [2, 12, .6], [2, 6, .1], [2, 10, .4],
    [2, 10, .22], [2, 10, .22], [2, 11, .42], [3, 6, .1], [0, 20, .6], [0, 20, .12],
    [0, 10, .25], [3, 9, .3], [1, 9, .08], [1, 23, .6], [0, 2, .12], [0, 28, .42],
    [0, 28, .25], [0, 16, .1], [0, 16, .5], [0, 1, .08], [0, 20, .6], [0, 20, .15],
    [2, 11, .42], [2, 11, .28], [0, 29, .1], [0, 29, .65], [0, 3, .1], [2, 12, .45],
    [3, 12, .25], [1, 29, .14], [1, 29, .45], [0, 1, .08], [0, 23, .6], [0, 23, .15],
    [0, 10, 0], [0, 10, 0], [0, 5, .12], [2, 10, .5], [3, 6, .12], [0, 24, .35],
    [0, 24, .22], [0, 21, .16], [0, 21, .45], [0, 1, .08], [0, 29, .6], [0, 29, .12],
    [0, 13, .25], [0, 14, .35], [2, 9, .1], [2, 9, .5], [3, 6, .1], [2, 11, .45],
    [2, 11, .2], [2, 10, .22], [2, 10, .42], [3, 6, .1], [0, 20, .55], [0, 20, .1],
    [0, 24, .22], [0, 24, .4], [2, 6, .1], [2, 12, .6], [3, 6, .1]
];

function drawTree() {
    const ctx = document.getElementById('treeMosaic').getContext('2d');
    const left = 14;

    ctx.fillStyle = '#f1f6fb';
    ctx.fillRect(0, 35 * BLOCK, 449, BLOCK);
    ctx.fillRect(0, 38 * BLOCK, 449, BLOCK);
    ctx.fillStyle = '#c0daf0';
    ctx.fillRect(0, 36 * BLOCK, 449, BLOCK * 2);

    treeBands.forEach(function(b, k) {
        for (let c = b[0]; c < b[1]; c++) {
            const a = b[2] * (0.55 + rnd() * 0.8);
            ctx.fillStyle = 'rgba(150,150,150,' + a + ')';
            ctx.fillRect(left + c * BLOCK, k * BLOCK, BLOCK, BLOCK);
        }
    });
    // selected row text
    for (let k = 36; k < 38; k++) {
        for (let c = 0; c < 10; c++) {
            const a = (c < 3 ? 0.06 : 0.22) * (0.6 + rnd() * 0.8);
            ctx.fillStyle = 'rgba(40,90,130,' + a + ')';
            ctx.fillRect(left + c * BLOCK, k * BLOCK, BLOCK, BLOCK);
        }
    }
}

drawTree();
```
